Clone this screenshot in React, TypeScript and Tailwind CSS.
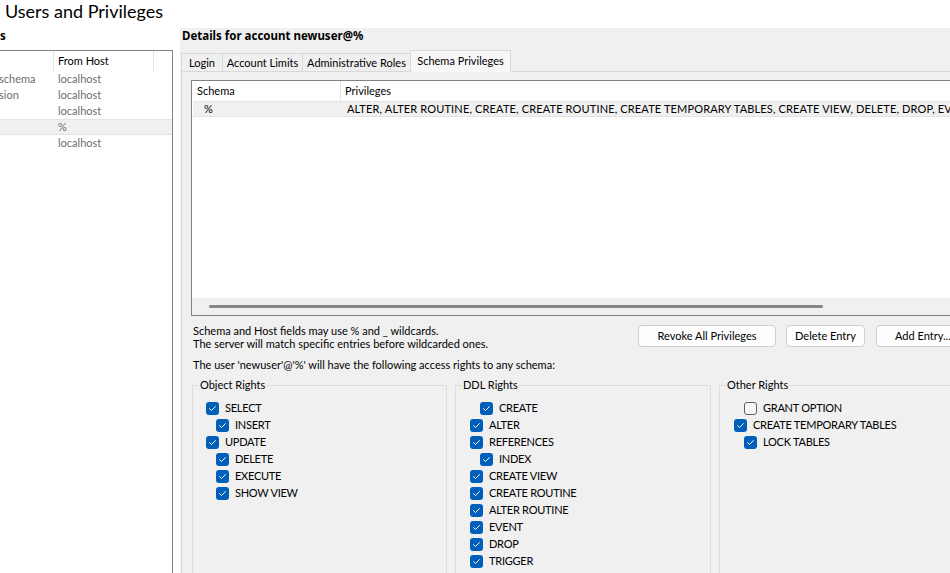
type Right = { label: string; checked: boolean; level: 0 | 1 };

const objectRights: Right[] = [
  { label: "SELECT", checked: true, level: 0 },
  { label: "INSERT", checked: true, level: 1 },
  { label: "UPDATE", checked: true, level: 0 },
  { label: "DELETE", checked: true, level: 1 },
  { label: "EXECUTE", checked: true, level: 1 },
  { label: "SHOW VIEW", checked: true, level: 1 },
];

const ddlRights: Right[] = [
  { label: "CREATE", checked: true, level: 1 },
  { label: "ALTER", checked: true, level: 0 },
  { label: "REFERENCES", checked: true, level: 0 },
  { label: "INDEX", checked: true, level: 1 },
  { label: "CREATE VIEW", checked: true, level: 0 },
  { label: "CREATE ROUTINE", checked: true, level: 0 },
  { label: "ALTER ROUTINE", checked: true, level: 0 },
  { label: "EVENT", checked: true, level: 0 },
  { label: "DROP", checked: true, level: 0 },
  { label: "TRIGGER", checked: true, level: 0 },
];

const otherRights: Right[] = [
  { label: "GRANT OPTION", checked: false, level: 1 },
  { label: "CREATE TEMPORARY TABLES", checked: true, level: 0 },
  { label: "LOCK TABLES", checked: true, level: 1 },
];

const accounts = [
  { user: "schema", host: "localhost", selected: false },
  { user: "sion", host: "localhost", selected: false },
  { user: "", host: "localhost", selected: false },
  { user: "", host: "%", selected: true },
  { user: "", host: "localhost", selected: false },
];

const privileges =
  "ALTER, ALTER ROUTINE, CREATE, CREATE ROUTINE, CREATE TEMPORARY TABLES, CREATE VIEW, DELETE, DROP, EVENT, EXECUTE, INDEX, INSERT, LOCK TABLES, REFERENCES, SELECT, SHOW VIEW, TRIGGER, UPDATE";

function CheckBox({ checked }: { checked: boolean }) {
  if (!checked) {
    return <span className="block w-[13px] h-[13px] shrink-0 rounded-[3px] border border-[#5f5f5f] bg-[#f7f7f7]" />;
  }
  return (
    <svg width="13" height="13" viewBox="0 0 13 13" className="shrink-0">
      <rect x="0" y="0" width="13" height="13" rx="3" fill="#005fb8" />
      <path d="M3.6 6.7 L5.5 8.5 L9.4 4.6" fill="none" stroke="#ffffff" strokeWidth="1" strokeLinecap="round" strokeLinejoin="round" />
    </svg>
  );
}

function RightsBox({ title, items, width, indent }: { title: string; items: Right[]; width: string; indent: [string, string] }) {
  return (
    <fieldset className={`${width} h-[210px] shrink-0 border border-[#dcdcdc] pl-[6px] pt-[7px]`}>
      <legend className="px-[1px] leading-[16px]">{title}</legend>
      {items.map((r) => (
        <div key={r.label} className={`flex items-center h-[17px] gap-[6px] ${r.level === 0 ? indent[0] : indent[1]}`}>
          <CheckBox checked={r.checked} />
          <span className="whitespace-nowrap tracking-[-0.25px]">{r.label}</span>
        </div>
      ))}
    </fieldset>
  );
}

function Tab({ label, width, active }: { label: string; width: string; active?: boolean }) {
  if (active) {
    return (
      <div className={`${width} h-[22px] -ml-px -mb-px relative z-10 flex justify-center pt-[2px] leading-[16px] border border-b-0 border-[#d9d9d9] bg-[#f7f7f7]`}>
        {label}
      </div>
    );
  }
  return (
    <div className={`${width} h-[18px] -ml-px first:ml-0 flex items-center justify-center leading-[16px] border border-b-0 border-[#d9d9d9] bg-[#f0f0f0]`}>
      {label}
    </div>
  );
}

export default function App() {
  return (
    <div className="w-[950px] h-[573px] overflow-hidden bg-white text-black text-[11px] font-['Lato',sans-serif] flex flex-col">
      <div className="h-[28px] shrink-0 pl-[5px] text-[18px] leading-[22px]">Users and Privileges</div>

      <div className="flex flex-1 min-h-0">
        {/* left: account list */}
        <div className="w-[180px] shrink-0 bg-white overflow-hidden">
          <div className="h-[22px] leading-[16px] font-bold font-['Noto_Sans',sans-serif] text-[11.5px]">s</div>
          <div className="w-[173px] h-[600px] border-t border-r border-[#828282]">
            <div className="h-[20px] flex items-center">
              <div className="w-[54px] h-full border-r border-[#e5e5e5]" />
              <div className="w-[100px] h-full pl-[4px] flex items-center border-r border-[#e5e5e5]">From Host</div>
            </div>
            {accounts.map((a, i) => (
              <div
                key={i}
                className={`h-[16px] flex items-center text-[#6d6d6d] ${a.selected ? "bg-[#f0f0f0] border-y border-[#e3e3e3]" : ""}`}
              >
                <div className="w-[54px] -ml-[1px] overflow-hidden whitespace-nowrap">{a.user}</div>
                <div className="pl-[5px]">{a.host}</div>
              </div>
            ))}
          </div>
        </div>

        {/* right: details */}
        <div className="flex-1 min-w-0 bg-[#f0f0f0] overflow-hidden">
          <div className="w-[820px]">
            <div className="h-[22px] pl-[2px] leading-[16px] font-bold font-['Noto_Sans',sans-serif] text-[11.5px] whitespace-nowrap">
              Details for account newuser@%
            </div>
            <div className="flex items-end h-[21px] pl-[1px]">
              <Tab label="Login" width="w-[42px]" />
              <Tab label="Account Limits" width="w-[81px]" />
              <Tab label="Administrative Roles" width="w-[109px]" />
              <Tab label="Schema Privileges" width="w-[101px]" active />
            </div>

            <div className="ml-[1px] border border-[#d9d9d9] bg-[#f0f0f0] pl-[9px] pt-[8px] h-[520px]">
              {/* schema table */}
              <div className="h-[236px] border border-r-0 border-[#828282] bg-white flex flex-col">
                <div className="h-[20px] flex shrink-0">
                  <div className="w-[149px] pl-[5px] flex items-center border-r border-[#e5e5e5]">Schema</div>
                  <div className="pl-[4px] flex items-center">Privileges</div>
                </div>
                <div className="h-[16px] ml-[1px] flex items-center bg-[#f0f0f0] border-y border-[#e3e3e3] whitespace-nowrap overflow-hidden">
                  <div className="w-[148px] shrink-0 pl-[11px]">%</div>
                  <div className="pl-[6px] tracking-[0.15px]">{privileges}</div>
                </div>
                <div className="flex-1" />
                <div className="h-[17px] shrink-0 bg-[#f0f0f0] flex items-center pl-[17px]">
                  <div className="w-[614px] h-[3px] rounded-full bg-[#868686]" />
                </div>
              </div>

              {/* hints and buttons */}
              <div className="flex mt-[8px]">
                <div className="w-[447px] pl-[2px] leading-[13px]">
                  <div>Schema and Host fields may use % and _ wildcards.</div>
                  <div>The server will match specific entries before wildcarded ones.</div>
                </div>
                <div className="flex gap-[10px] mt-[1px]">
                  <button className="w-[138px] h-[22px] rounded-[4px] border border-[#d0d0d0] bg-[#fdfdfd]">Revoke All Privileges</button>
                  <button className="w-[79px] h-[22px] rounded-[4px] border border-[#d0d0d0] bg-[#fdfdfd]">Delete Entry</button>
                  <button className="w-[100px] h-[22px] ml-px rounded-[4px] border border-[#d0d0d0] bg-[#fdfdfd] text-left pl-[18px]">Add Entry...</button>
                </div>
              </div>
              <div className="mt-[8px] pl-[2px] leading-[13px]">
                The user 'newuser'@'%' will have the following access rights to any schema:
              </div>

              {/* rights */}
              <div className="flex gap-[8px] mt-[6px] ml-[1px]">
                <RightsBox title="Object Rights" items={objectRights} width="w-[255px]" indent={["ml-[7px]", "ml-[17px]"]} />
                <RightsBox title="DDL Rights" items={ddlRights} width="w-[256px]" indent={["ml-[8px]", "ml-[18px]"]} />
                <RightsBox title="Other Rights" items={otherRights} width="w-[260px]" indent={["ml-[8px]", "ml-[18px]"]} />
              </div>
            </div>
          </div>
        </div>
      </div>
    </div>
  );
}
